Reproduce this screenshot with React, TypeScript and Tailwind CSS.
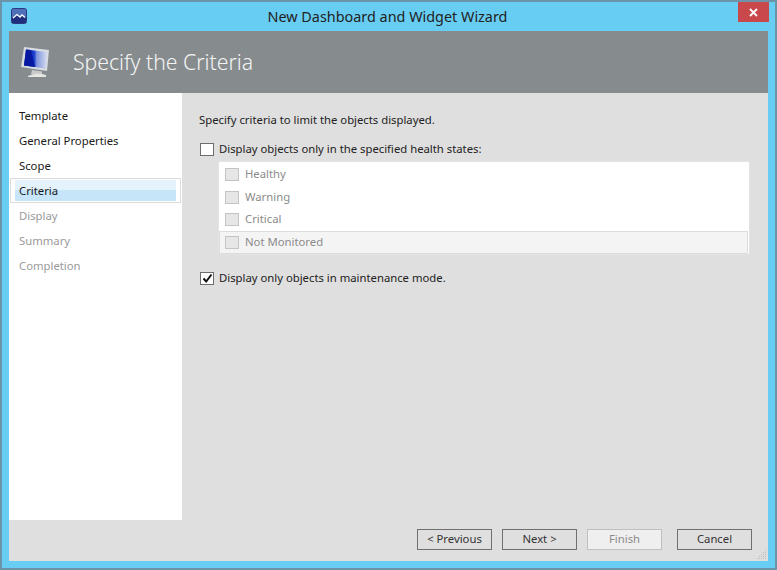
const font = { fontFamily: '"Noto Sans", "Open Sans", sans-serif' };

const steps = [
  { label: "Template", on: true },
  { label: "General Properties", on: true },
  { label: "Scope", on: true },
  { label: "Criteria", on: true, current: true },
  { label: "Display" },
  { label: "Summary" },
  { label: "Completion" },
];

function WizardIcon() {
  return (
    <svg width="32" height="34" viewBox="0 0 32 34" className="shrink-0">
      <defs>
        <linearGradient id="scr" x1="0" y1="0" x2="1" y2="0">
          <stop offset="0" stopColor="#0a1f9c" />
          <stop offset="0.45" stopColor="#1a3fd0" />
          <stop offset="0.55" stopColor="#7f95dc" />
          <stop offset="1" stopColor="#d5dcf0" />
        </linearGradient>
      </defs>
      <path d="M4 2 L29 5 L27 26 L1 22 Z" fill="#d9dde2" />
      <path d="M6 4.5 L27 7 L25.5 23.5 L4 20.5 Z" fill="url(#scr)" />
      <path d="M6 4.5 L11 5 L15 22 L4 20.5 Z" fill="#0718a0" />
      <path d="M12 25 L22 26.5 L22 30 L11 29 Z" fill="#c9cbcb" />
      <path d="M8 31 Q16 27 26 30 L26 32 L8 32 Z" fill="#e6e6e2" />
    </svg>
  );
}

function AppIcon() {
  return (
    <svg width="16" height="16" viewBox="0 0 16 16">
      <rect x="0.5" y="0.5" width="15" height="15" rx="2" fill="#4f6fb8" stroke="#2a3a80" />
      <path d="M1 10 L6 6.5 L9 9 L11 7 L15 9.5 L15 15 L1 15 Z" fill="#1f2f7e" />
      <path d="M2 10 L6 6.5 L9 9 L11 7 L14 9.5" fill="none" stroke="#ffffff" strokeWidth="1.3" />
    </svg>
  );
}

function Box({ checked, disabled }: { checked?: boolean; disabled?: boolean }) {
  return (
    <span
      className={
        disabled
          ? "block h-[13px] w-[14px] shrink-0 border border-[#c4c4c4] bg-[#e6e6e6]"
          : "flex h-[13px] w-[14px] shrink-0 items-center justify-center border border-[#6d6d6d] bg-white"
      }
    >
      {checked && (
        <svg width="11" height="11" viewBox="0 0 11 11">
          <path d="M1.5 5.5 L4.2 8.5 L9.5 1.5" fill="none" stroke="#111" strokeWidth="2" />
        </svg>
      )}
    </span>
  );
}

function Btn({ label, disabled, className }: { label: string; disabled?: boolean; className?: string }) {
  return (
    <div
      className={`flex h-[21px] w-[75px] items-center justify-center border text-[11.3px] ${
        disabled ? "border-[#bfbfbf] bg-[#efefef] text-[#8b8b8b]" : "border-[#707070] bg-[#dfdfdf] text-[#333]"
      } ${className ?? ""}`}
    >
      {label}
    </div>
  );
}

export default function App() {
  return (
    <div style={font} className="h-[570px] w-[777px] overflow-hidden border-2 border-[#6c93a8] bg-[#68cdf3]">
      <div className="relative flex h-[29px] items-center justify-center">
        <div className="absolute left-[9px] top-[6px]">
          <AppIcon />
        </div>
        <span className="relative left-[-1px] text-[14.4px] text-[#222]">New Dashboard and Widget Wizard</span>
        <div className="absolute right-[6px] top-0 flex h-[20px] w-[31px] items-center justify-center bg-[#c9484b]">
          <svg width="9" height="9" viewBox="0 0 9 9">
            <path d="M1 1 L8 8 M8 1 L1 8" stroke="#fff" strokeWidth="1.8" />
          </svg>
        </div>
      </div>
      <div className="mx-[7px] flex h-[530px] flex-col bg-[#dfdfdf]">
        <div className="flex h-[62px] shrink-0 items-center bg-[#868b8e] pl-[11px]">
          <WizardIcon />
          <span className="ml-[21px] text-[21.2px] font-light text-[#f4f4f4]">Specify the Criteria</span>
        </div>
        <div className="flex h-[427px] shrink-0">
          <div className="flex w-[173px] shrink-0 flex-col bg-white pt-[10px]">
            {steps.map((s) => (
              <div key={s.label} className="relative flex h-[25px] shrink-0 items-center pl-[10px] text-[11.3px]">
                {s.current && (
                  <div className="absolute inset-x-[1px] inset-y-0 border border-[#dcdcdc] px-[4px] py-[1px]">
                    <div className="h-full bg-gradient-to-b from-[#e4f2fb] from-50% to-[#c6e5f9] to-50%" />
                  </div>
                )}
                <span className={`relative top-[1px] ${s.on ? "text-[#1a1a1a]" : "text-[#9a9a9a]"}`}>{s.label}</span>
              </div>
            ))}
          </div>
          <div className="flex flex-1 flex-col pl-[17px] pr-[18px] pt-[18px] text-[11.3px] text-[#222]">
            <div className="h-[18px] leading-[18px]">Specify criteria to limit the objects displayed.</div>
            <div className="mt-[11px] flex h-[18px] items-center gap-[5px] pl-[1px]">
              <Box />
              <span>Display objects only in the specified health states:</span>
            </div>
            <div className="ml-[19px] mt-[3px] flex h-[94px] flex-col border border-[#e3e3e3] bg-white pt-[1px] text-[#8b8b8b]">
              {["Healthy", "Warning", "Critical"].map((t) => (
                <div key={t} className="flex h-[22.75px] items-center gap-[6px] pl-[6px]">
                  <Box disabled />
                  <span>{t}</span>
                </div>
              ))}
              <div className="mr-[1px] flex h-[23px] items-center gap-[6px] border border-[#dcdcdc] bg-[#f4f4f4] pl-[5px]">
                <Box disabled />
                <span>Not Monitored</span>
              </div>
            </div>
            <div className="mt-[14px] flex h-[18px] items-center gap-[5px] pl-[1px]">
              <Box checked />
              <span>Display only objects in maintenance mode.</span>
            </div>
          </div>
        </div>
        <div className="relative flex flex-1 items-start justify-end pr-[16px] pt-[9px]">
          <Btn label="< Previous" />
          <Btn label="Next >" className="ml-[10px]" />
          <Btn label="Finish" disabled className="ml-[10px]" />
          <Btn label="Cancel" className="ml-[15px]" />
          <svg width="11" height="11" viewBox="0 0 11 11" className="absolute bottom-[1px] right-[1px]">
            <path d="M9 1h1v1H9zM7 3h1v1H7zM9 3h1v1H9zM5 5h1v1H5zM7 5h1v1H7zM9 5h1v1H9zM3 7h1v1H3zM5 7h1v1H5zM7 7h1v1H7zM9 7h1v1H9zM1 9h1v1H1zM3 9h1v1H3zM5 9h1v1H5zM7 9h1v1H7zM9 9h1v1H9z" fill="#bdbdbd" />
          </svg>
        </div>
      </div>
    </div>
  );
}
